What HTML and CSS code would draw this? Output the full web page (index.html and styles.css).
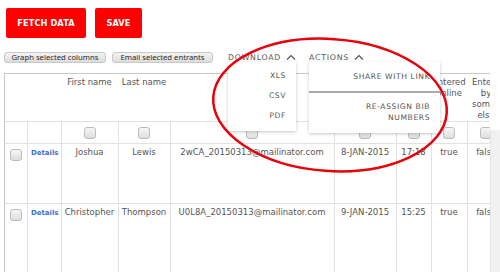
FILE: index.html
```html
<!DOCTYPE html>
<html lang="en">
<head>
    <meta charset="UTF-8">
    <meta name="viewport" content="width=device-width, initial-scale=1.0">
    <title>Entrants</title>
    <link rel="stylesheet" href="styles.css">
</head>
<body>
    <div class="page">
        <div class="top-buttons">
            <button class="btn-red btn-fetch">FETCH DATA</button>
            <button class="btn-red btn-save">SAVE</button>
        </div>

        <div class="tools">
            <button class="btn-gray btn-graph">Graph selected columns</button>
            <button class="btn-gray btn-email">Email selected entrants</button>

            <div class="dropdown dd-download">
                <span class="dd-toggle">DOWNLOAD
                    <svg class="caret" width="10" height="6" viewBox="0 0 10 6"><path d="M1 5.5 L5 1.5 L9 5.5" fill="none" stroke="#555" stroke-width="1.2"/></svg>
                </span>
                <ul class="dd-menu">
                    <li>XLS</li>
                    <li>CSV</li>
                    <li>PDF</li>
                </ul>
            </div>

            <div class="dropdown dd-actions">
                <span class="dd-toggle">ACTIONS
                    <svg class="caret" width="10" height="6" viewBox="0 0 10 6"><path d="M1 5.5 L5 1.5 L9 5.5" fill="none" stroke="#555" stroke-width="1.2"/></svg>
                </span>
                <ul class="dd-menu">
                    <li class="sep">SHARE WITH LINK</li>
                    <li>RE-ASSIGN BIB<br>NUMBERS</li>
                </ul>
            </div>
        </div>

        <div class="grid-area">
            <div class="grid-scroll">
                <table class="grid">
                    <colgroup>
                        <col class="c-check"><col class="c-details"><col class="c-first"><col class="c-last">
                        <col class="c-email"><col class="c-date"><col class="c-time"><col class="c-online"><col class="c-someone">
                    </colgroup>
                    <thead>
                        <tr class="head-row">
                            <th></th>
                            <th></th>
                            <th>First name</th>
                            <th>Last name</th>
                            <th>Email</th>
                            <th>Date</th>
                            <th>Time</th>
                            <th>Entered online</th>
                            <th>Entered by someone else</th>
                        </tr>
                        <tr class="filter-row">
                            <td></td>
                            <td></td>
                            <td><span class="cb"></span></td>
                            <td><span class="cb"></span></td>
                            <td><span class="cb"></span></td>
                            <td><span class="cb"></span></td>
                            <td><span class="cb"></span></td>
                            <td><span class="cb"></span></td>
                            <td><span class="cb"></span></td>
                        </tr>
                    </thead>
                    <tbody>
                        <tr class="data-row">
                            <td><span class="cb"></span></td>
                            <td><a class="details" href="#">Details</a></td>
                            <td>Joshua</td>
                            <td>Lewis</td>
                            <td>2wCA_20150313@mailinator.com</td>
                            <td>8-JAN-2015</td>
                            <td>17:18</td>
                            <td>true</td>
                            <td>false</td>
                        </tr>
                        <tr class="data-row tall">
                            <td><span class="cb"></span></td>
                            <td><a class="details" href="#">Details</a></td>
                            <td>Christopher</td>
                            <td>Thompson</td>
                            <td>U0L8A_20150313@mailinator.com</td>
                            <td>9-JAN-2015</td>
                            <td>15:25</td>
                            <td>true</td>
                            <td>false</td>
                        </tr>
                    </tbody>
                </table>
            </div>
            <div class="scrollbar"></div>
        </div>

        <!-- hand drawn highlight around the open menus -->
        <svg class="annotation" width="500" height="272" viewBox="0 0 500 272">
            <ellipse cx="330" cy="105" rx="117" ry="66" fill="none" stroke="#e8000b" stroke-width="2.5" transform="rotate(4 330 105)"/>
        </svg>
    </div>
</body>
</html>
```

FILE: styles.css
```css
body {
    margin: 0;
    background-color: #fff;
    font-family: "DejaVu Sans", sans-serif;
    color: #555;
    overflow: hidden;
}

.page {
    position: relative;
    width: 500px;
    height: 272px;
}

/* red action buttons */
.top-buttons {
    display: flex;
    gap: 9px;
    padding: 8px 0 0 6px;
}

.btn-red {
    height: 30px;
    border: none;
    border-radius: 2px;
    background-color: #ff0000;
    color: #fff;
    font-family: "DejaVu Sans", sans-serif;
    font-weight: bold;
    font-size: 8.2px;
    letter-spacing: 0.1px;
    padding: 0;
}

.btn-fetch { width: 80px; }
.btn-save { width: 47px; }

/* grey buttons + menus row */
.tools {
    display: flex;
    align-items: center;
    height: 11px;
    margin-top: 14px;
    padding-left: 4px;
}

.btn-gray {
    height: 11px;
    padding: 0;
    border: 1px solid #c8c8c8;
    border-radius: 3px;
    background: linear-gradient(#f4f4f4, #dcdcdc);
    color: #2a2a2a;
    font-family: "Noto Sans", sans-serif;
    font-size: 7.7px;
    line-height: 9px;
}

.btn-graph { width: 102px; }
.btn-email { width: 101px; margin-left: 6px; }

.dropdown {
    position: relative;
    height: 11px;
}

.dd-download { margin-left: 15px; }
.dd-actions { margin-left: 13px; }

.dd-toggle {
    display: flex;
    align-items: center;
    gap: 5px;
    height: 11px;
    font-size: 7.8px;
    letter-spacing: 0.75px;
    color: #555;
    white-space: nowrap;
}

.caret {
    display: block;
    margin-top: -1px;
}

.dd-menu {
    position: absolute;
    top: 10px;
    left: 0;
    margin: 0;
    padding: 0;
    list-style: none;
    background-color: #fff;
    box-shadow: 0 1px 3px rgba(0, 0, 0, 0.22);
    z-index: 5;
    text-align: right;
    font-size: 7.6px;
    letter-spacing: 0.6px;
    color: #555;
}

.dd-download .dd-menu {
    width: 68px;
    padding-top: 9px;
    height: 60px;
}

.dd-download .dd-menu li {
    height: 20px;
    padding-right: 10px;
}

.dd-actions .dd-menu {
    width: 131px;
    height: 71px;
}

.dd-actions .dd-menu li {
    padding-right: 10px;
    line-height: 11px;
}

.dd-actions .dd-menu li.sep {
    padding-top: 9px;
    height: 20px;
    border-bottom: 2px solid #aaa;
}

.dd-actions .dd-menu li + li {
    padding-top: 8px;
}

/* table */
.grid-area {
    display: flex;
    margin-top: 10px;
    margin-left: 4px;
}

.grid-scroll {
    width: 487px;
    height: 199px;
    overflow: hidden;
    border-left: 1px solid #c9c9c9;
    border-top: 1px solid #c9c9c9;
    box-sizing: border-box;
}

.scrollbar {
    width: 9px;
    margin-top: 57px;
    background-color: #f1f1f1;
    border-left: 1px solid #e4e4e4;
}

.grid {
    border-collapse: collapse;
    table-layout: fixed;
    width: 500px;
    font-size: 8.5px;
    color: #555;
}

.c-check { width: 22px; }
.c-details { width: 34px; }
.c-first { width: 57px; }
.c-last { width: 52px; }
.c-email { width: 164px; }
.c-date { width: 62px; }
.c-time { width: 35px; }
.c-online { width: 36px; }
.c-someone { width: 38px; }

.grid th,
.grid td {
    padding: 0;
    text-align: center;
    vertical-align: top;
    overflow: hidden;
    white-space: nowrap;
}

.grid td {
    border-left: 1px solid #e2e2e2;
    border-bottom: 1px solid #e2e2e2;
}

.grid tr td:first-child {
    border-left: none;
}

.head-row th {
    height: 45px;
    padding-top: 3px;
    font-weight: normal;
    line-height: 11px;
    white-space: normal;
    border-bottom: 1px solid #e2e2e2;
    box-sizing: border-box;
}

.head-row th:last-child {
    padding: 3px 5px 0;
}

.filter-row td {
    height: 21px;
    vertical-align: middle;
}

.data-row td {
    height: 60px;
    padding-top: 3px;
    box-sizing: border-box;
}

.data-row.tall td {
    height: 80px;
}

.data-row td:nth-child(2) {
    text-align: right;
    padding-right: 2px;
}

.cb {
    display: inline-block;
    width: 10px;
    height: 10px;
    border: 1px solid #bdbdbd;
    border-radius: 3px;
    background: linear-gradient(#f7f7f7, #dedede);
    vertical-align: middle;
}

.data-row .cb {
    margin-top: 2px;
}

.details {
    color: #3a72d8;
    text-decoration: none;
    font-size: 7px;
    font-weight: bold;
}

/* highlight drawn over the screenshot */
.annotation {
    position: absolute;
    top: 0;
    left: 0;
    pointer-events: none;
    z-index: 10;
}
```
